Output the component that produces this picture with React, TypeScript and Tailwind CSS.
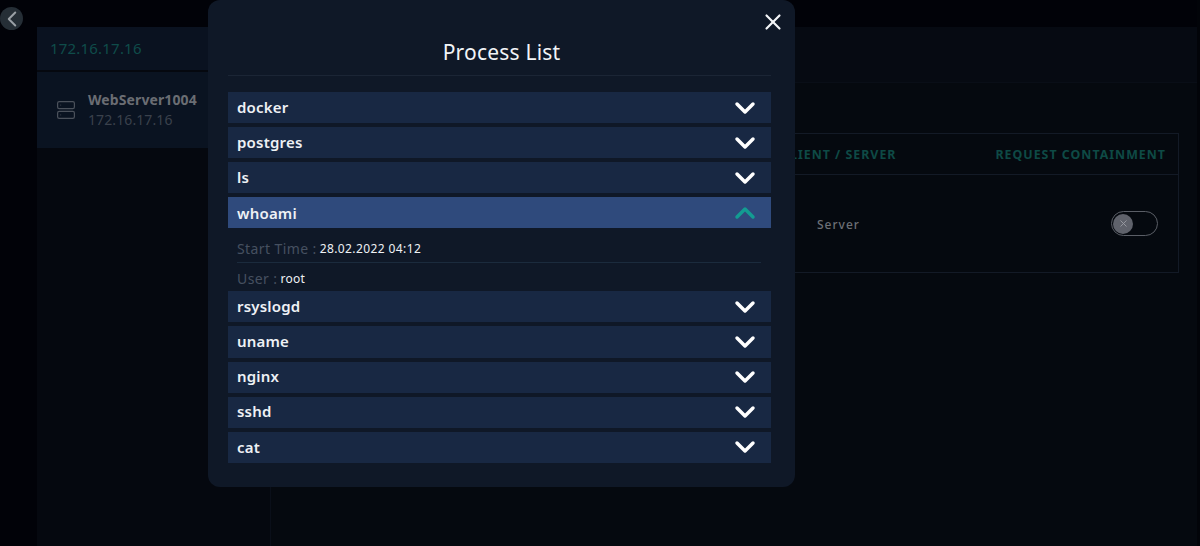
import { ChevronDown, ChevronLeft, ChevronUp, X } from "lucide-react";

const before = ["docker", "postgres", "ls"];
const after = ["rsyslogd", "uname", "nginx", "sshd", "cat"];

const Row = ({ name }: { name: string }) => (
  <div className="flex h-[31.1px] shrink-0 items-center justify-between bg-[#182843] pr-[10px] pl-[9px]">
    <span className="pb-[1px] text-[15px] font-semibold tracking-[0.2px] text-[#eef1f5]">{name}</span>
    <ChevronDown className="h-[32px] w-[32px] text-white" strokeWidth={2.6} />
  </div>
);

export default function App() {
  return (
    <div className="relative flex h-[546px] w-[1200px] overflow-hidden bg-[#020409] font-['Noto_Sans','Open_Sans',sans-serif]">
      <div className="w-[37px] shrink-0 bg-[#010208]" />
      <div className="flex min-w-0 flex-1 flex-col">
        <div className="h-[27px] shrink-0 bg-[#010208]" />
        <div className="flex flex-1">
          {/* sidebar */}
          <aside className="w-[234px] shrink-0 border-r border-[#0a0f19] bg-[#05080f]">
            <div className="flex h-[43px] items-center bg-[#0a1220] pl-[13px] text-[15px] tracking-[0.2px] text-[#0f4c4a]">
              172.16.17.16
            </div>
            <div className="mt-[2px] flex h-[76px] items-center bg-[#0a1321] pl-[20px]">
              <svg width="18" height="18" viewBox="0 0 18 18" fill="none" stroke="#4b515b" strokeWidth="1.2" className="shrink-0">
                <rect x="0.6" y="0.6" width="16.8" height="7" rx="1.6" />
                <rect x="0.6" y="10.4" width="16.8" height="7" rx="1.6" />
                <path d="M3.5 4.1h.6M3.5 13.9h.6" />
              </svg>
              <div className="ml-[13px]">
                <div className="text-[14px] leading-[20px] font-bold tracking-[0.1px] text-[#6a6d73]">WebServer1004</div>
                <div className="text-[14px] leading-[20px] tracking-[0.1px] text-[#3a414c]">172.16.17.16</div>
              </div>
            </div>
          </aside>
          {/* main */}
          <main className="flex min-w-0 flex-1 flex-col bg-[#05090f]">
            <div className="h-[56px] shrink-0 border-b border-[#090e17] bg-[#060a12]" />
            <div className="flex-1 pt-[50px] pr-[18px] pl-[21px]">
              <div className="border border-[#131a26]">
                <div className="flex h-[41px] items-center justify-between border-b border-[#131a26] pt-[2px] pr-[12px] pl-[488px] text-[12.4px] font-bold tracking-[1px] text-[#0e4a45]">
                  <span>CLIENT / SERVER</span>
                  <span>REQUEST CONTAINMENT</span>
                </div>
                <div className="flex h-[97px] items-center justify-between pr-[20px] pl-[524px]">
                  <span className="pt-[3px] text-[12px] font-medium tracking-[1px] text-[#6d7076]">Server</span>
                  <div className="flex h-[25px] w-[47px] items-center rounded-full border border-[#5a5e66] pl-[1px]">
                    <div className="flex h-[20px] w-[20px] items-center justify-center rounded-full bg-[#5f626b]">
                      <X className="h-[11px] w-[11px] text-[#9a9da3]" strokeWidth={2} />
                    </div>
                  </div>
                </div>
              </div>
            </div>
          </main>
        </div>
      </div>
      <div className="w-[3px] shrink-0 bg-[#020409]" />

      {/* back button */}
      <button className="absolute top-[7px] left-0 flex h-[23px] w-[23px] items-center justify-center rounded-full bg-[#252e36]">
        <ChevronLeft className="h-[26px] w-[26px] shrink-0 text-[#9aa0a6]" strokeWidth={1.8} />
      </button>

      {/* modal */}
      <div className="absolute top-0 left-[208px] flex h-[487px] w-[587px] flex-col rounded-[12px] bg-[#0f1827] pr-[24px] pl-[20px]">
        <button className="absolute top-[9px] right-[9px] text-[#f2f4f7]">
          <X className="h-[26px] w-[26px]" strokeWidth={2} />
        </button>
        <div className="flex h-[76px] shrink-0 items-center justify-center border-b border-[#1b2535] pt-[31px] pl-[4px] text-[21px] tracking-[0.2px] text-[#f2f4f7]">
          Process List
        </div>
        <div className="mt-[16px] flex flex-col gap-[4px]">
          {before.map((name) => (
            <Row key={name} name={name} />
          ))}
          <div className="flex h-[31.1px] shrink-0 items-center justify-between bg-[#2f4a7c] pr-[10px] pl-[9px]">
            <span className="text-[15px] font-semibold tracking-[0.2px] text-[#eef1f5]">whoami</span>
            <ChevronUp className="h-[32px] w-[32px] text-[#139c92]" strokeWidth={2.6} />
          </div>
          <div className="-mt-[4px] -mb-[4px] flex h-[63px] shrink-0 flex-col pr-[10px] pl-[9px]">
            <div className="flex h-[35px] shrink-0 items-end border-b border-[#1b2b3d] pb-[3px]">
              <span className="text-[14px] leading-[20px] tracking-[0.4px] text-[#465060]">Start Time :</span>
              <span className="ml-[3px] text-[12px] leading-[20px] tracking-[0.4px] text-[#eef1f5]">28.02.2022 04:12</span>
            </div>
            <div className="flex items-end pt-[6px]">
              <span className="text-[14px] leading-[20px] tracking-[0.4px] text-[#465060]">User :</span>
              <span className="ml-[3px] text-[12px] leading-[20px] tracking-[0.3px] text-[#eef1f5]">root</span>
            </div>
          </div>
          {after.map((name) => (
            <Row key={name} name={name} />
          ))}
        </div>
      </div>
    </div>
  );
}
